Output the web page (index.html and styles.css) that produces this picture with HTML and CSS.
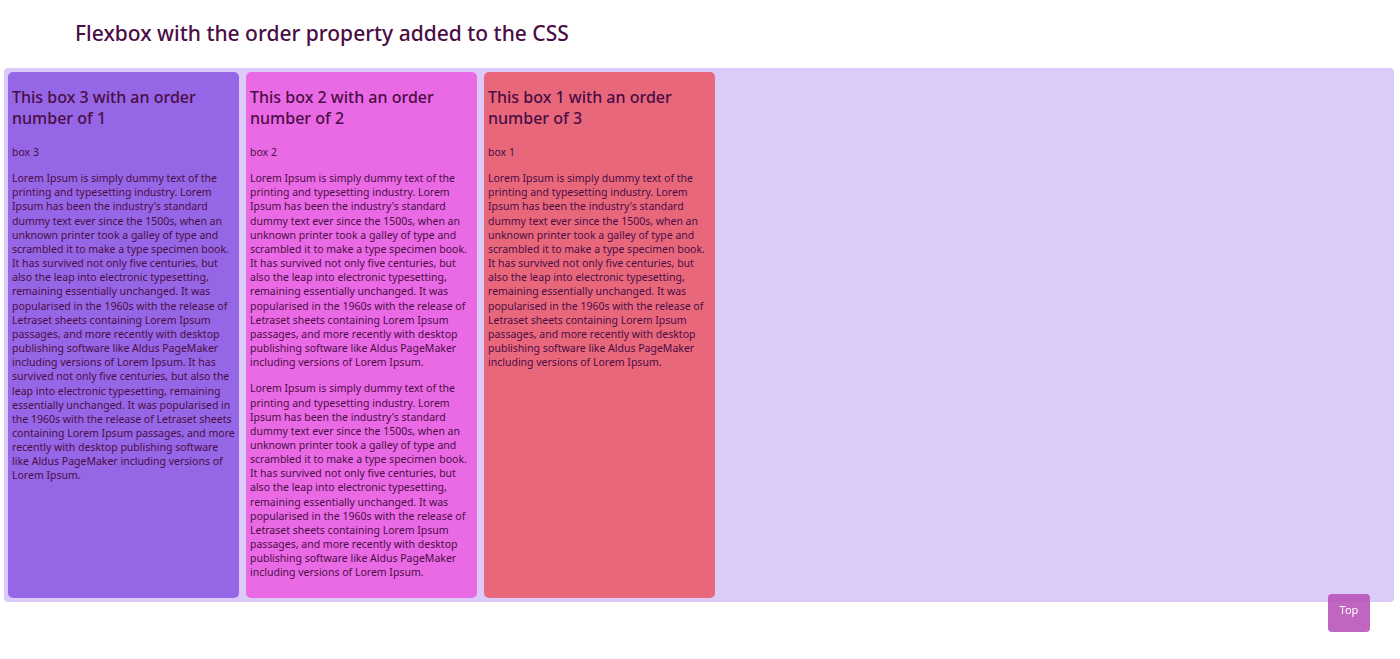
FILE: index.html
```html
<!DOCTYPE html>
<html lang="en">
<head>
<meta charset="utf-8">
<title>Flexbox order</title>
<link rel="stylesheet" href="styles.css">
</head>
<body>
<h1 class="page-title">Flexbox with the order property added to the CSS</h1>
<div class="flex-container">
  <div class="box box-three">
    <h2>This box 3 with an order number of 1</h2>
    <p>box 3</p>
    <p>Lorem Ipsum is simply dummy text of the printing and typesetting industry. Lorem Ipsum has been the industry's standard dummy text ever since the 1500s, when an unknown printer took a galley of type and scrambled it to make a type specimen book. It has survived not only five centuries, but also the leap into electronic typesetting, remaining essentially unchanged. It was popularised in the 1960s with the release of Letraset sheets containing Lorem Ipsum passages, and more recently with desktop publishing software like Aldus PageMaker including versions of Lorem Ipsum. It has survived not only five centuries, but also the leap into electronic typesetting, remaining essentially unchanged. It was popularised in the 1960s with the release of Letraset sheets containing Lorem Ipsum passages, and more recently with desktop publishing software like Aldus PageMaker including versions of Lorem Ipsum.</p>
  </div>
  <div class="box box-two">
    <h2>This box 2 with an order number of 2</h2>
    <p>box 2</p>
    <p>Lorem Ipsum is simply dummy text of the printing and typesetting industry. Lorem Ipsum has been the industry's standard dummy text ever since the 1500s, when an unknown printer took a galley of type and scrambled it to make a type specimen book. It has survived not only five centuries, but also the leap into electronic typesetting, remaining essentially unchanged. It was popularised in the 1960s with the release of Letraset sheets containing Lorem Ipsum passages, and more recently with desktop publishing software like Aldus PageMaker including versions of Lorem Ipsum.</p>
    <p>Lorem Ipsum is simply dummy text of the printing and typesetting industry. Lorem Ipsum has been the industry's standard dummy text ever since the 1500s, when an unknown printer took a galley of type and scrambled it to make a type specimen book. It has survived not only five centuries, but also the leap into electronic typesetting, remaining essentially unchanged. It was popularised in the 1960s with the release of Letraset sheets containing Lorem Ipsum passages, and more recently with desktop publishing software like Aldus PageMaker including versions of Lorem Ipsum.</p>
  </div>
  <div class="box box-one">
    <h2>This box 1 with an order number of 3</h2>
    <p>box 1</p>
    <p>Lorem Ipsum is simply dummy text of the printing and typesetting industry. Lorem Ipsum has been the industry's standard dummy text ever since the 1500s, when an unknown printer took a galley of type and scrambled it to make a type specimen book. It has survived not only five centuries, but also the leap into electronic typesetting, remaining essentially unchanged. It was popularised in the 1960s with the release of Letraset sheets containing Lorem Ipsum passages, and more recently with desktop publishing software like Aldus PageMaker including versions of Lorem Ipsum.</p>
  </div>
</div>
<a class="top-button" href="#">Top</a>
</body>
</html>
```
FILE: styles.css
```css
body {
  margin: 0;
  padding: 0 6px 0 4px;
  font-family: "Noto Sans", "DejaVu Sans", sans-serif;
  color: #4a0d45;
  background: #ffffff;
}
.page-title {
  margin: 0;
  padding: 19px 0 21px 71px;
  font-size: 21px;
  font-weight: 500;
  line-height: 28px;
  color: #4a0d45;
}
.flex-container {
  display: flex;
  gap: 7px;
  padding: 4px;
  background: #dccbf8;
  border-radius: 4px;
}
.box {
  width: 231px;
  flex: 0 0 231px;
  box-sizing: border-box;
  padding: 15px 4px 6px;
  border-radius: 5px;
}
.box-three { background: #9566e6; }
.box-two { background: #ea6ae6; }
.box-one { background: #e9677b; }
.box h2 {
  margin: 0 0 16px;
  font-size: 16px;
  font-weight: 500;
  line-height: 21px;
}
.box p {
  margin: 0 0 12px;
  font-size: 10.5px;
  line-height: 14.15px;
}
.top-button {
  position: fixed;
  left: 1328px;
  top: 594px;
  width: 42px;
  height: 38px;
  box-sizing: border-box;
  padding-top: 8px;
  text-align: center;
  background: rgba(185, 85, 185, 0.9);
  border-radius: 4px;
  color: #ffffff;
  font-size: 11px;
  text-decoration: none;
}
```
